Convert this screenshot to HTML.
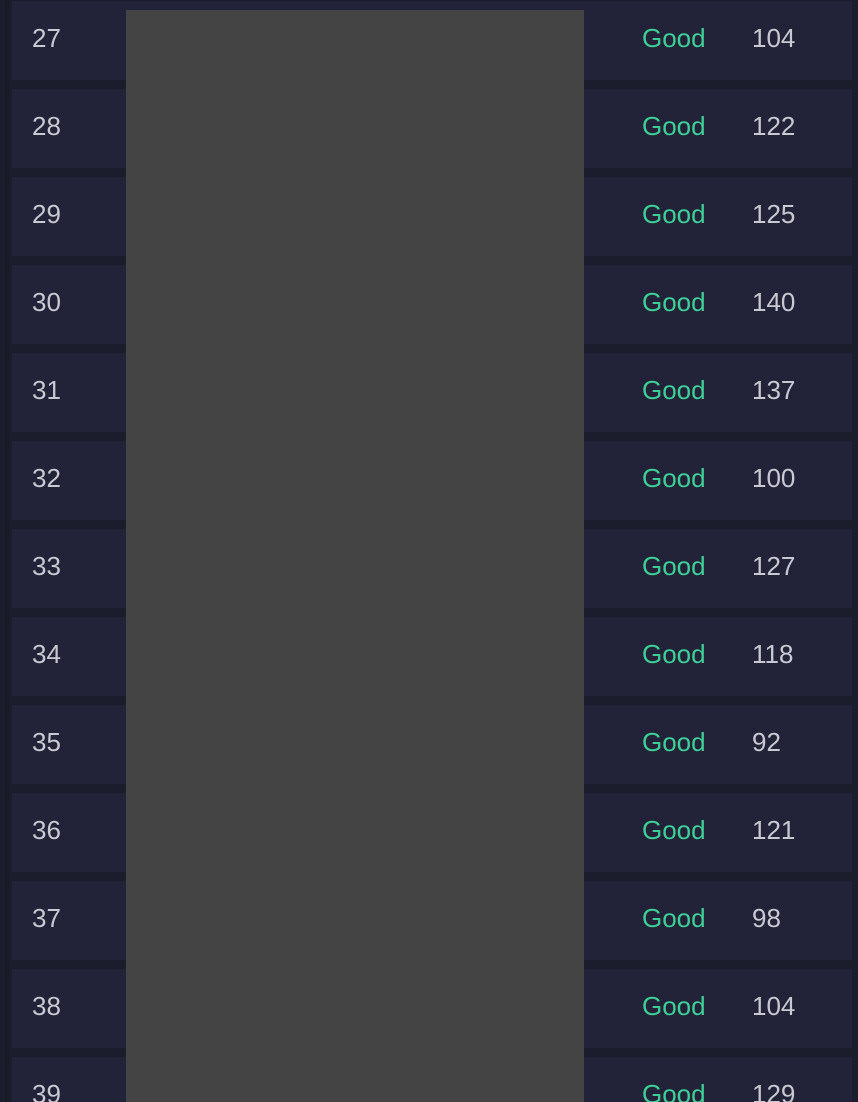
<!DOCTYPE html>
<html style="overflow:hidden;width:858px;height:1102px"><head><style>
html,body{margin:0;width:858px;height:1102px;overflow:hidden}
body{background:#1c1d2c;font-family:"Liberation Sans",sans-serif;position:relative}
.strip{position:absolute;left:5px;top:0;width:4px;height:1102px;background:#191a28}
.row{position:absolute;left:12px;width:840px;height:79px;background:#222338}
.row span{position:absolute;top:0;line-height:75px;font-size:26px}
.n{left:20px;color:#c9c9d2}
.g{left:630px;color:#3fcf96}
.v{left:740px;color:#c9c9d2}
.gray{position:absolute;left:126px;top:10px;width:458px;height:1092px;background:#444444}
.wrap{position:absolute;left:0;top:0;width:858px;height:1102px;overflow:hidden}
</style></head><body><div class="wrap">
<div class="strip"></div>
<div class="row" style="top:1px"><span class="n">27</span><span class="g">Good</span><span class="v">104</span></div>
<div class="row" style="top:89px"><span class="n">28</span><span class="g">Good</span><span class="v">122</span></div>
<div class="row" style="top:177px"><span class="n">29</span><span class="g">Good</span><span class="v">125</span></div>
<div class="row" style="top:265px"><span class="n">30</span><span class="g">Good</span><span class="v">140</span></div>
<div class="row" style="top:353px"><span class="n">31</span><span class="g">Good</span><span class="v">137</span></div>
<div class="row" style="top:441px"><span class="n">32</span><span class="g">Good</span><span class="v">100</span></div>
<div class="row" style="top:529px"><span class="n">33</span><span class="g">Good</span><span class="v">127</span></div>
<div class="row" style="top:617px"><span class="n">34</span><span class="g">Good</span><span class="v">118</span></div>
<div class="row" style="top:705px"><span class="n">35</span><span class="g">Good</span><span class="v">92</span></div>
<div class="row" style="top:793px"><span class="n">36</span><span class="g">Good</span><span class="v">121</span></div>
<div class="row" style="top:881px"><span class="n">37</span><span class="g">Good</span><span class="v">98</span></div>
<div class="row" style="top:969px"><span class="n">38</span><span class="g">Good</span><span class="v">104</span></div>
<div class="row" style="top:1057px;height:45px"><span class="n">39</span><span class="g">Good</span><span class="v">129</span></div>
<div class="gray"></div>
</div></body></html>
